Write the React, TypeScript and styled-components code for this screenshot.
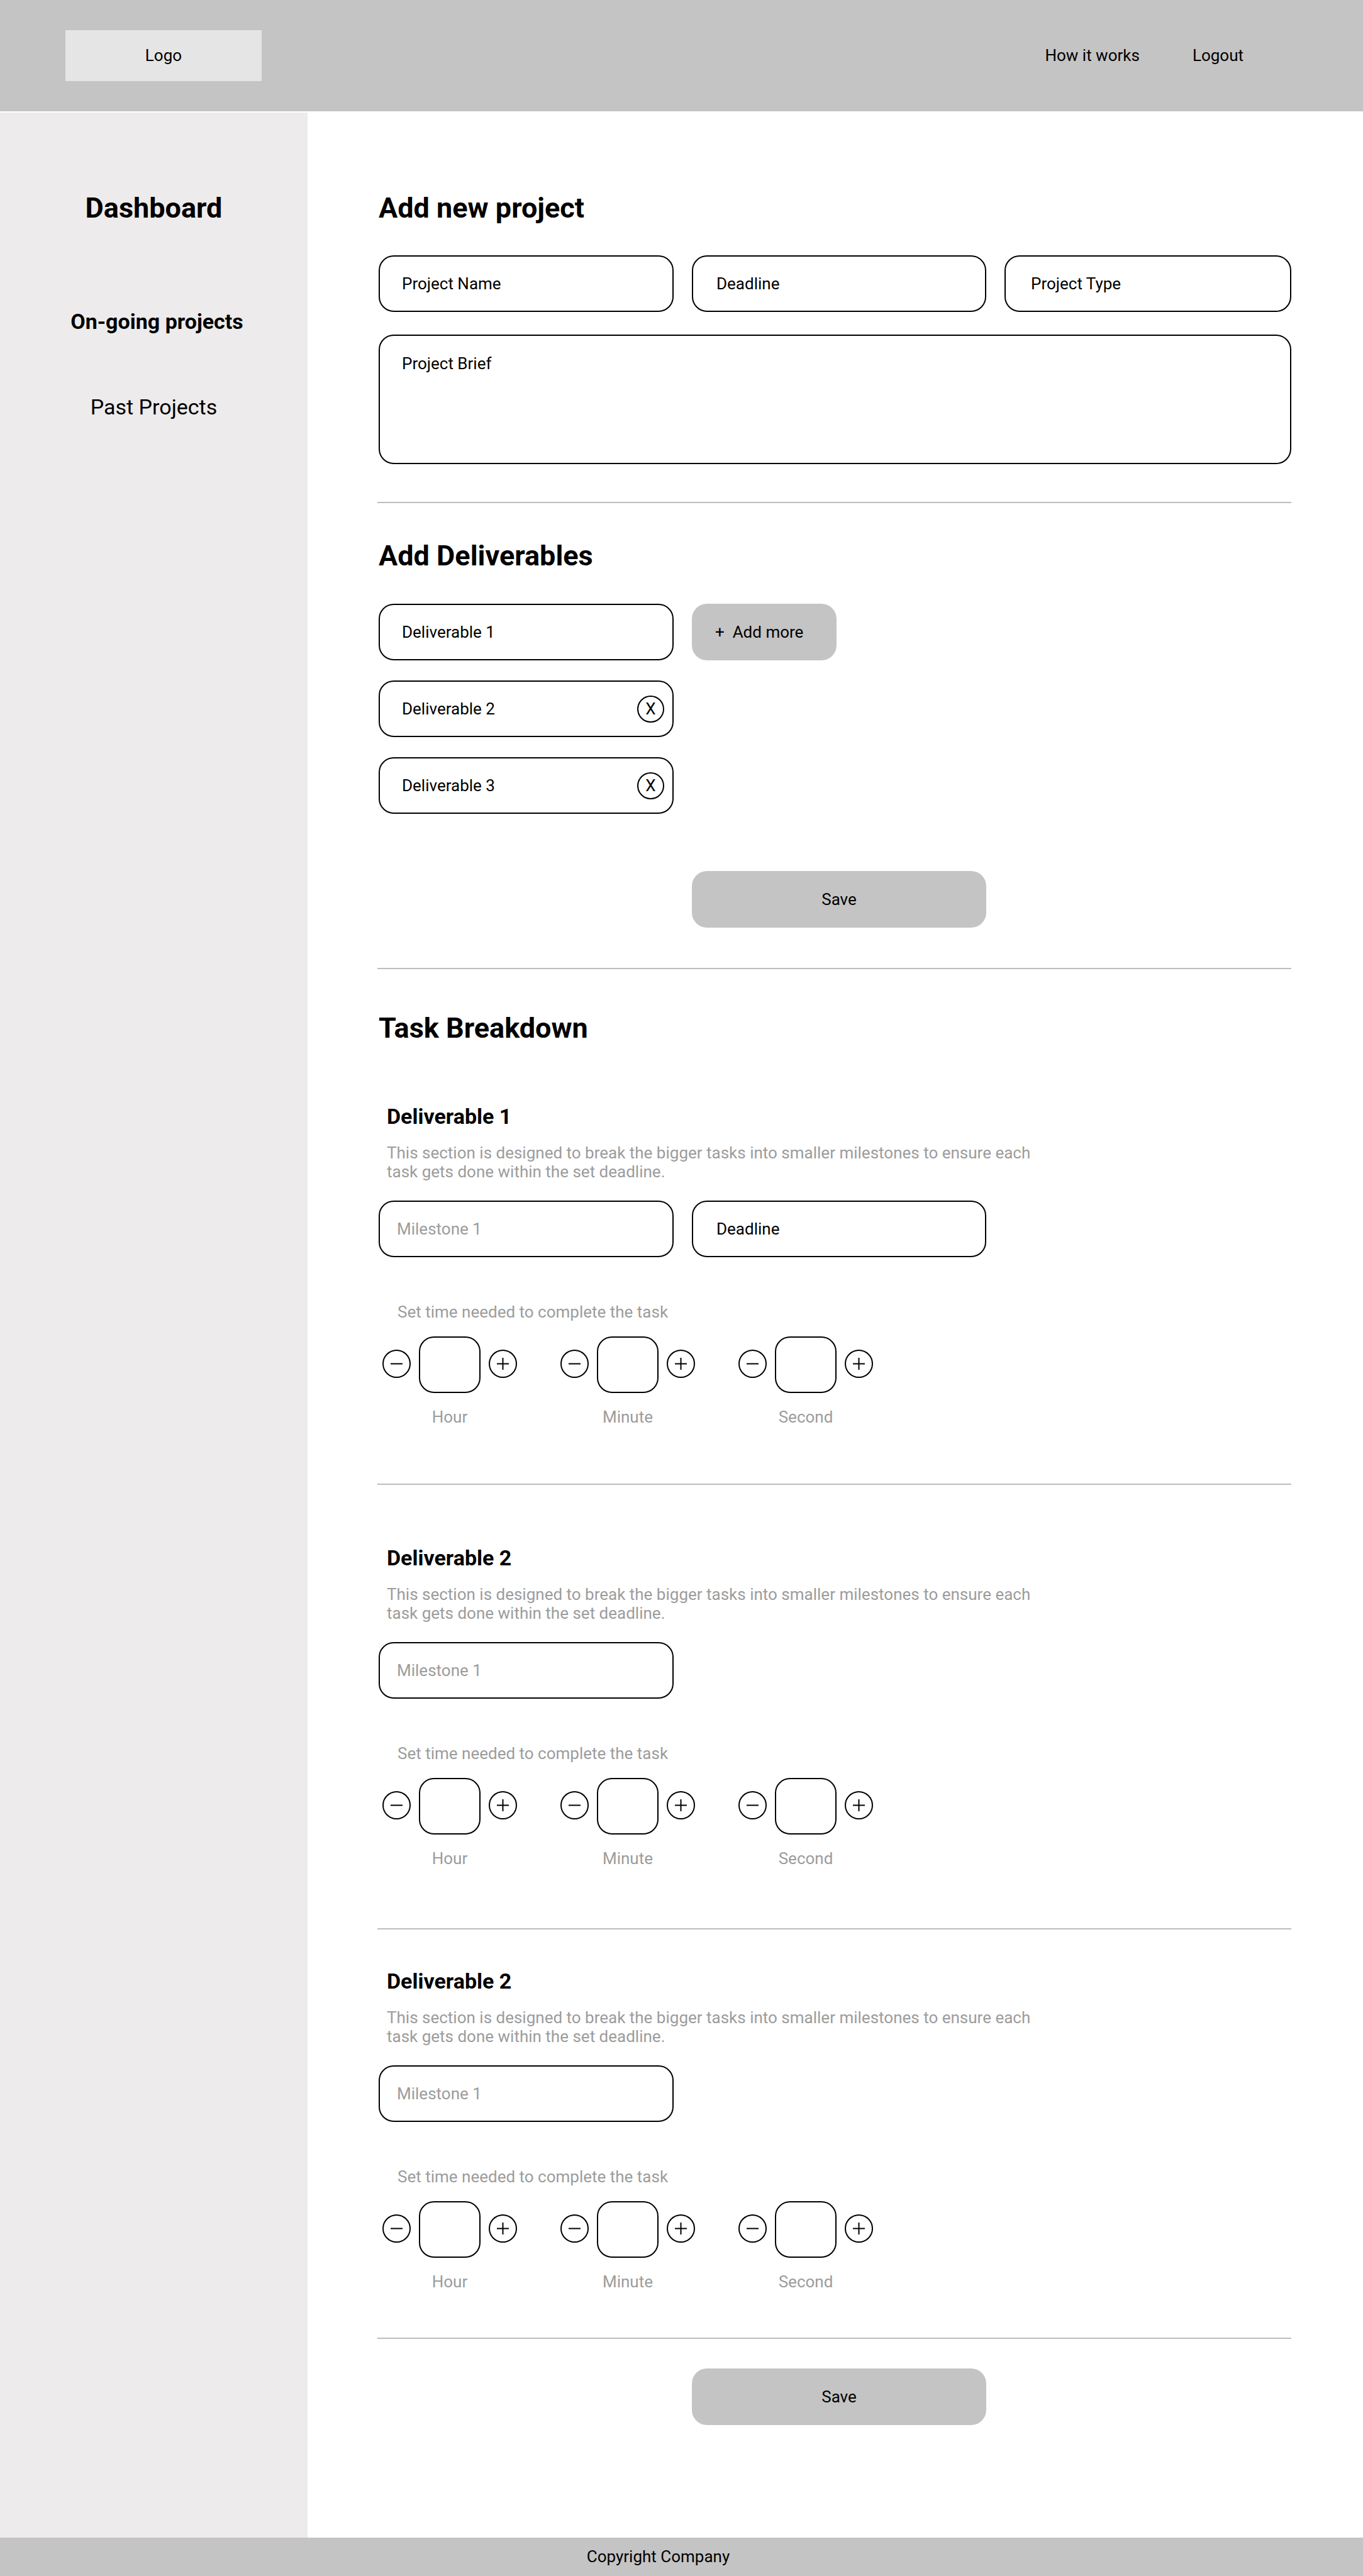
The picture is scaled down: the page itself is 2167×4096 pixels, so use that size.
import React, { useId } from "react";
import styled, { createGlobalStyle } from "styled-components";

const GlobalStyle = createGlobalStyle`
  *, *::before, *::after { box-sizing: border-box; }
  body {
    margin: 0;
    background: #fff;
    color: #000;
    font-family: Roboto, "Liberation Sans", sans-serif;
    font-size: 26px;
    line-height: 31px;
  }
  h1, h2, h3, p { margin: 0; }
  a { color: inherit; text-decoration: none; }
  button, input, textarea { font: inherit; color: inherit; }
`;

const Page = styled.div`
  display: flex;
  flex-direction: column;
  min-height: 100vh;
`;

const Header = styled.header`
  display: flex;
  align-items: center;
  justify-content: space-between;
  height: 177px;
  padding: 0 190px 0 104px;
  background: #c4c4c4;
`;

const Logo = styled.a`
  display: flex;
  align-items: center;
  justify-content: center;
  width: 312px;
  height: 81px;
  background: #e5e5e5;
`;

const TopNav = styled.nav`
  display: flex;
  gap: 84px;
`;

const Body = styled.div`
  display: flex;
  flex: 1;
`;

const Sidebar = styled.aside`
  flex: none;
  width: 489px;
  margin-top: 2px;
  padding-top: 125px;
  background: #edebec;
  text-align: center;
`;

const SideNav = styled.nav`
  display: flex;
  flex-direction: column;
  gap: 96px;
  margin-top: 134px;
`;

const SideLink = styled.a<{ $active?: boolean }>`
  padding-left: ${(p) => (p.$active ? "10px" : "0")};
  font-size: 34px;
  line-height: 40px;
  font-weight: ${(p) => (p.$active ? 700 : 400)};
`;

const Main = styled.main`
  flex: 1;
  min-width: 0;
  padding: 127px 114px 178px 111px;
`;

const Section = styled.section<{ $above?: number; $below?: number }>`
  padding: ${(p) => p.$above ?? 0}px 0 ${(p) => p.$below ?? 0}px 2px;
`;

const Divider = styled.hr`
  height: 2px;
  margin: 0;
  border: 0;
  background: #bdbdbd;
`;

const Title = styled.h2`
  font-size: 45px;
  line-height: 53px;
  font-weight: 700;
`;

const FieldGrid = styled.div<{ $above: number; $rowGap?: number }>`
  display: grid;
  grid-template-columns: 469fr 468fr 456fr;
  gap: ${(p) => p.$rowGap ?? 0}px 29px;
  margin-top: ${(p) => p.$above}px;
`;

const Field = styled.div<{ $column?: number }>`
  display: flex;
  align-items: center;
  grid-column: ${(p) => p.$column ?? "auto"};
  height: 90px;
  padding-right: 13px;
  border: 2px solid #000;
  border-radius: 24px;
`;

const TextInput = styled.input<{ $inset?: number; $muted?: boolean }>`
  flex: 1;
  min-width: 0;
  height: 100%;
  padding: 0 0 0 ${(p) => p.$inset ?? 35}px;
  border: 0;
  outline: 0;
  background: none;
  &::placeholder {
    color: ${(p) => (p.$muted ? "#9c9c9c" : "#000")};
    opacity: 1;
  }
`;

const Brief = styled.textarea`
  display: block;
  grid-column: 1 / -1;
  width: 100%;
  height: 206px;
  padding: 29px 35px;
  border: 2px solid #000;
  border-radius: 24px;
  outline: 0;
  background: none;
  resize: none;
  &::placeholder { color: #000; opacity: 1; }
`;

const RoundButton = styled.button<{ $size: number }>`
  display: flex;
  flex: none;
  align-items: center;
  justify-content: center;
  width: ${(p) => p.$size}px;
  height: ${(p) => p.$size}px;
  padding: 0;
  border: 2px solid #000;
  border-radius: 50%;
  background: none;
`;

const FilledButton = styled.button`
  grid-column: 2;
  height: 90px;
  padding: 0;
  border: 0;
  border-radius: 24px;
  background: #c4c4c4;
`;

const AddButton = styled(FilledButton)`
  justify-self: start;
  width: 230px;
  padding-left: 37px;
  text-align: left;
  white-space: pre;
`;

const Breakdown = styled.article<{ $above: number; $below: number }>`
  padding: ${(p) => p.$above}px 0 ${(p) => p.$below}px 2px;
`;

const BreakdownTitle = styled.h3`
  padding-left: 13px;
  font-size: 34px;
  line-height: 40px;
  font-weight: 700;
`;

const Hint = styled.p`
  max-width: 1062px;
  margin-top: 23px;
  padding-left: 13px;
  color: #9c9c9c;
  line-height: 30px;
`;

const TimeHint = styled.p`
  margin-top: 72px;
  padding-left: 30px;
  color: #9c9c9c;
`;

const Steppers = styled.div`
  display: flex;
  gap: 69px;
  margin-top: 23px;
  padding-left: 6px;
`;

const Stepper = styled.div`
  display: grid;
  grid-template-columns: 45px 98px 45px;
  column-gap: 13px;
  row-gap: 23px;
  align-items: center;
`;

const StepButton = styled(RoundButton)`
  margin-bottom: 4px;
`;

const Amount = styled.input`
  width: 98px;
  height: 90px;
  padding: 0;
  border: 2px solid #000;
  border-radius: 24px;
  outline: 0;
  background: none;
  text-align: center;
`;

const Unit = styled.label`
  grid-column: 2;
  color: #9c9c9c;
  text-align: center;
`;

const Footer = styled.footer`
  padding: 15px 74px 15px 0;
  background: #c4c4c4;
  text-align: center;
`;

function SignIcon({ plus }: { plus?: boolean }) {
  return (
    <svg width="19" height="19" viewBox="0 0 19 19" stroke="#000" strokeWidth="2" aria-hidden="true">
      <path d={plus ? "M0 9.5H19M9.5 0V19" : "M0 9.5H19"} />
    </svg>
  );
}

function TimeStepper({ unit }: { unit: string }) {
  const id = useId();
  return (
    <Stepper>
      <StepButton type="button" $size={45} aria-label={`Decrease ${unit}`}>
        <SignIcon />
      </StepButton>
      <Amount id={id} type="text" inputMode="numeric" />
      <StepButton type="button" $size={45} aria-label={`Increase ${unit}`}>
        <SignIcon plus />
      </StepButton>
      <Unit htmlFor={id}>{unit}</Unit>
    </Stepper>
  );
}

interface BreakdownProps {
  title: string;
  above: number;
  below: number;
  withDeadline?: boolean;
}

function DeliverableBreakdown({ title, above, below, withDeadline }: BreakdownProps) {
  return (
    <Breakdown $above={above} $below={below}>
      <BreakdownTitle>{title}</BreakdownTitle>
      <Hint>
        This section is designed to break the bigger tasks into smaller milestones to ensure each
        task gets done within the set deadline.
      </Hint>
      <FieldGrid $above={31}>
        <Field>
          <TextInput $inset={27} $muted placeholder="Milestone 1" aria-label="Milestone 1" />
        </Field>
        {withDeadline && (
          <Field>
            <TextInput $inset={37} placeholder="Deadline" aria-label="Milestone deadline" />
          </Field>
        )}
      </FieldGrid>
      <TimeHint>Set time needed to complete the task</TimeHint>
      <Steppers>
        <TimeStepper unit="Hour" />
        <TimeStepper unit="Minute" />
        <TimeStepper unit="Second" />
      </Steppers>
    </Breakdown>
  );
}

export default function App() {
  return (
    <Page>
      <GlobalStyle />
      <Header>
        <Logo href="#">Logo</Logo>
        <TopNav>
          <a href="#how">How it works</a>
          <a href="#logout">Logout</a>
        </TopNav>
      </Header>
      <Body>
        <Sidebar>
          <Title as="h1">Dashboard</Title>
          <SideNav>
            <SideLink href="#ongoing" $active>On-going projects</SideLink>
            <SideLink href="#past">Past Projects</SideLink>
          </SideNav>
        </Sidebar>
        <Main>
          <Section $below={60}>
            <Title>Add new project</Title>
            <FieldGrid $above={49} $rowGap={36}>
              <Field>
                <TextInput placeholder="Project Name" aria-label="Project Name" />
              </Field>
              <Field>
                <TextInput $inset={37} placeholder="Deadline" aria-label="Deadline" />
              </Field>
              <Field>
                <TextInput $inset={40} placeholder="Project Type" aria-label="Project Type" />
              </Field>
              <Brief placeholder="Project Brief" aria-label="Project Brief" />
            </FieldGrid>
          </Section>
          <Divider />
          <Section $above={57} $below={64}>
            <Title>Add Deliverables</Title>
            <FieldGrid $above={50} $rowGap={32}>
              <Field>
                <TextInput placeholder="Deliverable 1" aria-label="Deliverable 1" />
              </Field>
              <AddButton type="button">{"+  Add more"}</AddButton>
              {[2, 3].map((n) => (
                <Field key={n} $column={1}>
                  <TextInput placeholder={`Deliverable ${n}`} aria-label={`Deliverable ${n}`} />
                  <RoundButton type="button" $size={43} aria-label={`Remove deliverable ${n}`}>X</RoundButton>
                </Field>
              ))}
            </FieldGrid>
            <FieldGrid $above={91}>
              <FilledButton type="button">Save</FilledButton>
            </FieldGrid>
          </Section>
          <Divider />
          <Section $above={67}>
            <Title>Task Breakdown</Title>
          </Section>
          <DeliverableBreakdown title="Deliverable 1" above={94} below={90} withDeadline />
          <Divider />
          <DeliverableBreakdown title="Deliverable 2" above={96} below={95} />
          <Divider />
          <DeliverableBreakdown title="Deliverable 2" above={62} below={73} />
          <Divider />
          <Section>
            <FieldGrid $above={47}>
              <FilledButton type="button">Save</FilledButton>
            </FieldGrid>
          </Section>
        </Main>
      </Body>
      <Footer>Copyright Company</Footer>
    </Page>
  );
}
